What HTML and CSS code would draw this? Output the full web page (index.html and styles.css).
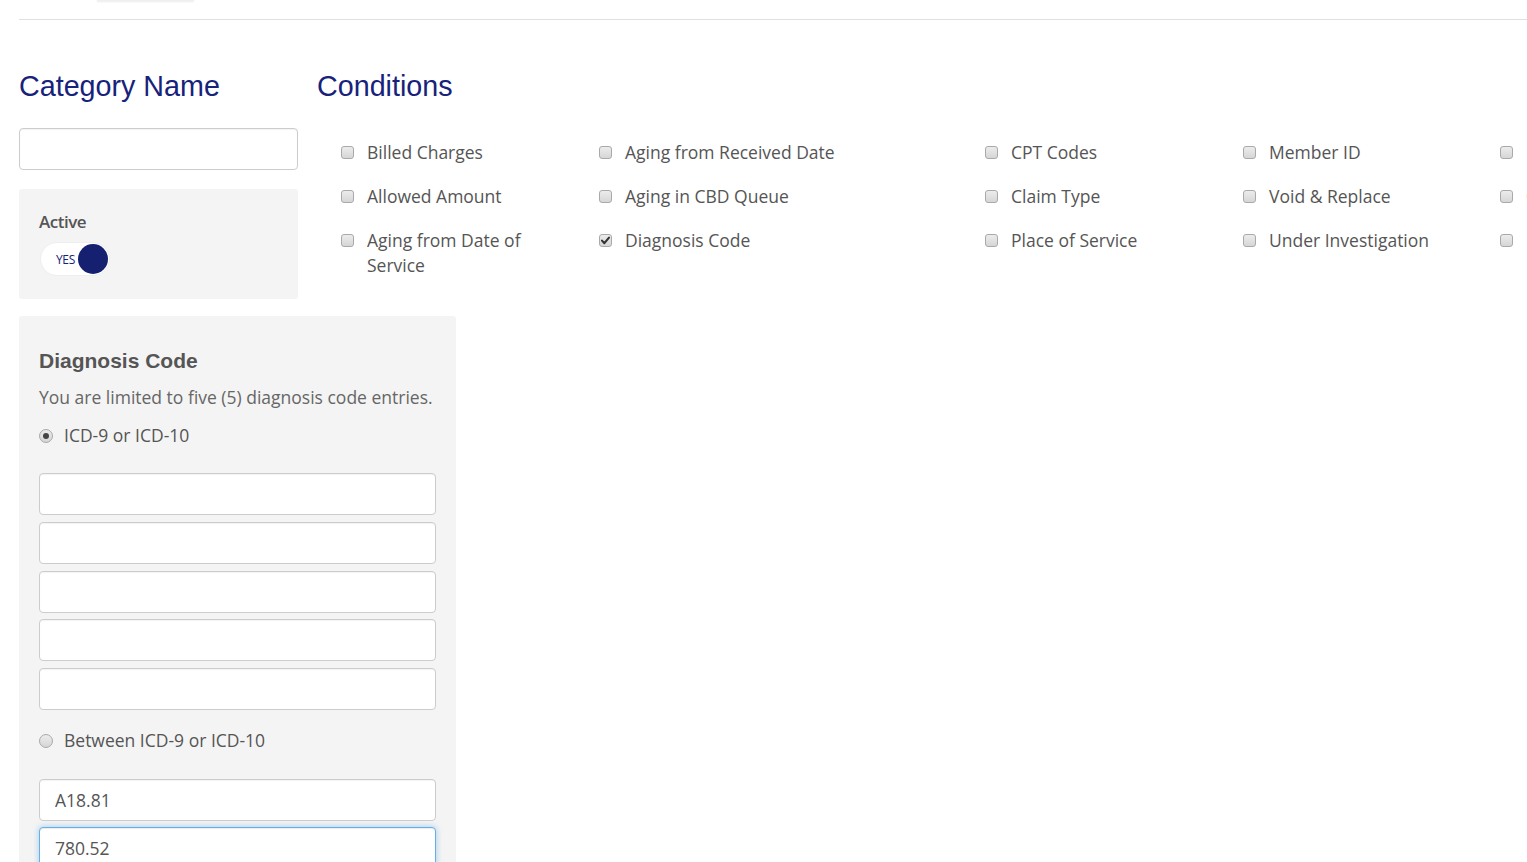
FILE: index.html
```html
<!DOCTYPE html>
<html lang="en">
<head>
<meta charset="utf-8">
<title>Category</title>
<link rel="stylesheet" href="styles.css">
</head>
<body>
<div class="topbar"><span class="tab-shadow"></span></div>
<main class="page">
  <div class="top-row">
    <section class="left-col">
      <h2 class="heading">Category Name</h2>
      <input class="field" type="text">
      <div class="active-panel">
        <div class="active-label">Active</div>
        <div class="toggle"><span class="toggle-text">YES</span><span class="knob"></span></div>
      </div>
    </section>
    <section class="conditions">
      <h2 class="heading">Conditions</h2>
      <div class="cond-grid">
        <div class="col">
          <label class="cond"><span class="cb"></span><span>Billed Charges</span></label>
          <label class="cond"><span class="cb"></span><span>Allowed Amount</span></label>
          <label class="cond"><span class="cb"></span><span>Aging from Date of<br>Service</span></label>
        </div>
        <div class="col">
          <label class="cond"><span class="cb"></span><span>Aging from Received Date</span></label>
          <label class="cond"><span class="cb"></span><span>Aging in CBD Queue</span></label>
          <label class="cond"><span class="cb checked"><svg viewBox="0 0 13 13" width="13" height="13"><path d="M3 6.6 L5.4 9.2 L10 3.6" fill="none" stroke="#333" stroke-width="2.1" stroke-linecap="round" stroke-linejoin="round"/></svg></span><span>Diagnosis Code</span></label>
        </div>
        <div class="col">
          <label class="cond"><span class="cb"></span><span>CPT Codes</span></label>
          <label class="cond"><span class="cb"></span><span>Claim Type</span></label>
          <label class="cond"><span class="cb"></span><span>Place of Service</span></label>
        </div>
        <div class="col">
          <label class="cond"><span class="cb"></span><span>Member ID</span></label>
          <label class="cond"><span class="cb"></span><span>Void &amp; Replace</span></label>
          <label class="cond"><span class="cb"></span><span>Under Investigation</span></label>
        </div>
        <div class="col">
          <label class="cond"><span class="cb"></span><span>Provider NPI</span></label>
          <label class="cond"><span class="cb"></span><span>Claim Status</span></label>
          <label class="cond"><span class="cb"></span><span>Revenue Code</span></label>
        </div>
      </div>
    </section>
  </div>

  <section class="diag-panel">
    <h3 class="diag-title">Diagnosis Code</h3>
    <p class="diag-desc">You are limited to five (5) diagnosis code entries.</p>
    <label class="radio-row"><span class="radio checked"></span><span>ICD-9 or ICD-10</span></label>
    <div class="inputs">
      <input class="field wide" type="text">
      <input class="field wide" type="text">
      <input class="field wide" type="text">
      <input class="field wide" type="text">
      <input class="field wide" type="text">
    </div>
    <label class="radio-row second"><span class="radio"></span><span>Between ICD-9 or ICD-10</span></label>
    <div class="inputs lower">
      <input class="field wide" type="text" value="A18.81">
      <input class="field wide focused" type="text" value="780.52">
    </div>
  </section>
</main>
</body>
</html>
```

FILE: styles.css
```css
html, body {
  margin: 0;
  padding: 0;
  overflow: hidden;
  background: #fff;
}
body {
  font-family: "Open Sans", "Liberation Sans", sans-serif;
  color: #555;
  width: 1527px;
  height: 862px;
}
.topbar {
  height: 19px;
  margin-left: 19px;
  border-bottom: 1px solid #e0e0e0;
  position: relative;
}
.tab-shadow {
  position: absolute;
  left: 78px;
  top: -2px;
  width: 97px;
  height: 3px;
  background: #f0f0f0;
  box-shadow: 0 1px 2px rgba(0,0,0,0.08);
}
.page {
  padding-left: 19px;
  padding-top: 50px;
}
.top-row {
  display: flex;
  gap: 19px;
}
.left-col {
  width: 279px;
  flex: none;
}
.heading {
  margin: 0;
  font-family: "Liberation Sans", Arial, sans-serif;
  font-weight: normal;
  font-size: 28.7px;
  line-height: 32px;
  color: #17227a;
}
.field {
  display: block;
  box-sizing: border-box;
  width: 279px;
  height: 42px;
  margin: 26px 0 0 0;
  border: 1px solid #ccc;
  border-radius: 4px;
  background: #fff;
  font-family: "Open Sans", sans-serif;
  font-size: 17.5px;
  color: #555;
  padding: 0 15px;
  outline: none;
  box-shadow: inset 0 1px 1px rgba(0,0,0,0.05);
}
.active-panel {
  margin-top: 19px;
  height: 110px;
  box-sizing: border-box;
  background: #f4f4f4;
  border-radius: 3px;
  padding: 21px 20px 0 20px;
}
.active-label {
  font-size: 17px;
  font-weight: 600;
  line-height: 24px;
  letter-spacing: -0.5px;
  color: #555;
}
.toggle {
  margin-top: 8px;
  margin-left: 1px;
  width: 70px;
  height: 34px;
  box-sizing: border-box;
  border: 1px solid #eee;
  border-radius: 17px;
  background: #fff;
  display: flex;
  align-items: center;
  justify-content: flex-end;
  padding-right: 1px;
  gap: 3px;
}
.toggle-text {
  font-size: 12px;
  color: #17227a;
  letter-spacing: -0.3px;
}
.knob {
  width: 30px;
  height: 30px;
  border-radius: 50%;
  background: #152170;
}
.conditions {
  flex: none;
}
.cond-grid {
  display: grid;
  grid-template-columns: 258px 386px 258px 257px 257px;
  padding-left: 24px;
  margin-top: 38px;
}
.col {
  display: flex;
  flex-direction: column;
  gap: 19px;
}
.cond {
  display: flex;
  align-items: flex-start;
  gap: 13px;
  font-size: 17.5px;
  line-height: 25px;
  color: #555;
  white-space: nowrap;
}
.cb {
  flex: none;
  width: 13px;
  height: 13px;
  margin-top: 6px;
  box-sizing: border-box;
  border: 1px solid #a9a9a9;
  border-radius: 3px;
  background: linear-gradient(#ececec, #d6d6d6);
  display: flex;
  align-items: center;
  justify-content: center;
}
.cb svg {
  display: block;
  margin: -1px;
}
.diag-panel {
  margin-top: 17px;
  width: 437px;
  height: 600px;
  box-sizing: border-box;
  background: #f4f4f4;
  border-radius: 3px;
  padding: 33px 20px 0 20px;
}
.diag-title {
  margin: 0;
  font-family: "Liberation Sans", Arial, sans-serif;
  font-weight: bold;
  font-size: 21px;
  line-height: 24px;
  color: #555;
}
.diag-desc {
  margin: 12px 0 0 0;
  font-size: 17.5px;
  line-height: 25px;
  color: #666;
}
.radio-row {
  display: flex;
  align-items: center;
  gap: 11px;
  margin-top: 13px;
  font-size: 17.5px;
  line-height: 25px;
  color: #555;
}
.radio-row.second {
  margin-top: 18px;
}
.radio {
  flex: none;
  width: 14px;
  height: 14px;
  box-sizing: border-box;
  border: 1px solid #a9a9a9;
  border-radius: 50%;
  background: linear-gradient(#ececec, #d6d6d6);
  display: flex;
  align-items: center;
  justify-content: center;
}
.radio.checked::after {
  content: "";
  width: 6px;
  height: 6px;
  border-radius: 50%;
  background: #444;
}
.inputs {
  display: flex;
  flex-direction: column;
  gap: 6.75px;
  margin-top: 25px;
}
.inputs.lower {
  margin-top: 25.5px;
}
.field.wide {
  width: 397px;
  margin: 0;
}
.field.focused {
  border-color: #66afe9;
  box-shadow: inset 0 1px 1px rgba(0,0,0,0.075), 0 0 6px rgba(102,175,233,0.6);
}
```
